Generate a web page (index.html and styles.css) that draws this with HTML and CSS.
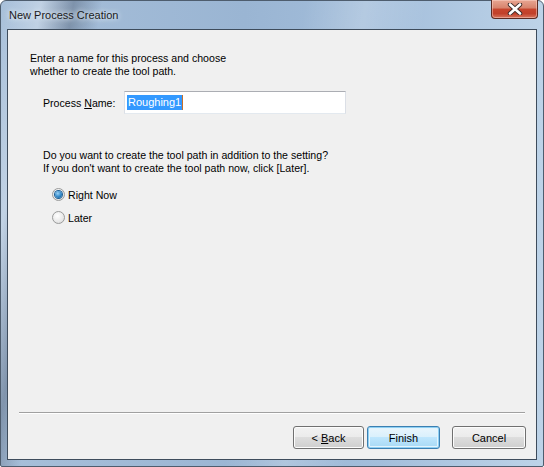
FILE: index.html
```html
<!DOCTYPE html>
<html>
<head>
	<meta charset="utf-8" />
	<title>New Process Creation</title>
	<link rel="stylesheet" href="styles.css">
</head>
<body>
	<div class="window">
		<div class="titlebar">
			<div class="title">New Process Creation</div>
			<div class="close">
				<svg width="16" height="12" viewBox="0 0 16 12">
					<path d="M3 1.5 L13 10.5 M13 1.5 L3 10.5" stroke="#3b2a28" stroke-width="4.4" stroke-linecap="round" />
					<path d="M3 1.5 L13 10.5 M13 1.5 L3 10.5" stroke="#ffffff" stroke-width="2.6" stroke-linecap="round" />
				</svg>
			</div>
		</div>
		<div class="client">
			<div class="intro">Enter a name for this process and choose<br />whether to create the tool path.</div>
			<div class="namerow">
				<span class="label">Process <u>N</u>ame:</span>
				<div class="edit"><span class="sel">Roughing1</span><span class="caret"></span></div>
			</div>
			<div class="question">Do you want to create the tool path in addition to the setting?<br />If you don't want to create the tool path now, click [Later].</div>
			<div class="options">
				<div class="option"><span class="radio checked"><span class="dot"></span></span><span>Right Now</span></div>
				<div class="option"><span class="radio"></span><span>Later</span></div>
			</div>
			<div class="spacer"></div>
			<div class="separator"></div>
			<div class="buttons">
				<div class="btn back"><span>&lt; <u>B</u>ack</span></div>
				<div class="btn finish"><span>Finish</span></div>
				<div class="btn cancel"><span>Cancel</span></div>
			</div>
		</div>
	</div>
</body>
</html>
```

FILE: styles.css
```css
body {
	margin: 0;
	background: #ffffff;
	font: 10.6px "Liberation Sans", Arial, sans-serif;
	color: #000000;
}

.window {
	width: 544px;
	height: 467px;
	box-sizing: border-box;
	padding: 0 6px 6px 6px;
	display: flex;
	flex-direction: column;
	border-radius: 6px 6px 2px 2px;
	border: 1px solid #4e5d6e;
	background:
		linear-gradient(100deg, rgba(255,255,255,0) 0px, rgba(255,255,255,0.3) 40px, rgba(40,50,70,0.3) 72px, rgba(255,255,255,0) 100px, rgba(255,255,255,0) 300px, rgba(255,255,255,0.2) 360px, rgba(255,255,255,0) 420px),
		linear-gradient(90deg, #a7bfd9 0%, #9ab5d3 45%, #a3bedb 70%, #bdd3e8 100%);
}

.titlebar {
	height: 28px;
	display: flex;
	align-items: flex-start;
}

.title {
	padding: 8px 0 0 2px;
	font: 11px "Liberation Sans", Arial, sans-serif;
	color: #1b1b1b;
	text-shadow: 0 0 6px #dfe9f3, 0 0 4px #dfe9f3;
	flex: 1;
}

.close {
	margin: -1px -1px 0 0;
	width: 47px;
	height: 19px;
	box-sizing: border-box;
	border: 1px solid #5b2a22;
	border-top: none;
	border-radius: 0 0 4px 4px;
	background: linear-gradient(#e8a692 0%, #d7826c 45%, #c7452d 50%, #c1402a 75%, #d7745c 100%);
	box-shadow: inset 0 0 0 1px rgba(255,220,210,0.45);
	display: flex;
	align-items: center;
	justify-content: center;
}

.client {
	flex: 1;
	border: 1px solid #3e4c5c;
	background: #f0f0f0;
	display: flex;
	flex-direction: column;
	padding: 0 10px 0 11px;
}

.intro {
	margin: 22px 0 0 11px;
	line-height: 13px;
}

.namerow {
	margin: 13px 0 0 24px;
	display: flex;
	align-items: center;
}

.label {
	width: 81px;
}

.edit {
	width: 222px;
	height: 23px;
	box-sizing: border-box;
	background: #ffffff;
	border: 1px solid #dbdfe6;
	border-top-color: #abadb3;
	border-bottom-color: #e3e9ef;
	padding: 3px 0 0 2px;
	display: flex;
	align-items: flex-start;
}

.sel {
	background: #3399ff;
	color: #ffffff;
	font-size: 11px;
	line-height: 15px;
	padding: 0 1px;
}

.caret {
	width: 1px;
	height: 15px;
	background: #c8702a;
}

.question {
	margin: 35px 0 0 24px;
	line-height: 13px;
}

.options {
	margin: 8px 0 0 33px;
}

.option {
	display: flex;
	align-items: center;
	height: 23px;
}

.radio {
	width: 13px;
	height: 13px;
	box-sizing: border-box;
	border-radius: 50%;
	border: 1px solid #9a9b9b;
	background: radial-gradient(circle at 40% 35%, #ffffff 0%, #e8e8e8 60%, #d4d4d4 100%);
	margin-right: 3px;
	display: flex;
	align-items: center;
	justify-content: center;
}

.dot {
	width: 7px;
	height: 7px;
	border-radius: 50%;
	background: radial-gradient(circle at 40% 35%, #9bd2f5 0%, #2f86c7 55%, #0d4f86 100%);
	box-shadow: 0 0 0 1px #1d5e93;
}

.spacer {
	flex: 1;
}

.separator {
	width: 506px;
	height: 1px;
	background: #a0a0a0;
	border-bottom: 1px solid #ffffff;
}

.buttons {
	display: flex;
	justify-content: flex-end;
	margin: 12px 0 10px 0;
}

.btn {
	height: 23px;
	box-sizing: border-box;
	border: 1px solid #707070;
	border-radius: 3px;
	background: linear-gradient(#f2f2f2 0%, #ebebeb 49%, #dddddd 50%, #cfcfcf 100%);
	box-shadow: inset 0 0 0 1px #fcfcfc;
	display: flex;
	align-items: center;
	justify-content: center;
	font-size: 11px;
}

.back {
	width: 71px;
}

.finish {
	width: 73px;
	margin-left: 3px;
	border-color: #3c7fb1;
	background: linear-gradient(#eaf6fd 0%, #d9f0fc 49%, #bee6fd 50%, #a7d9f5 100%);
	box-shadow: inset 0 0 0 1px #8ed0f4, inset 0 0 0 2px #e4f4fc;
}

.cancel {
	width: 74px;
	margin-left: 12px;
}
```
